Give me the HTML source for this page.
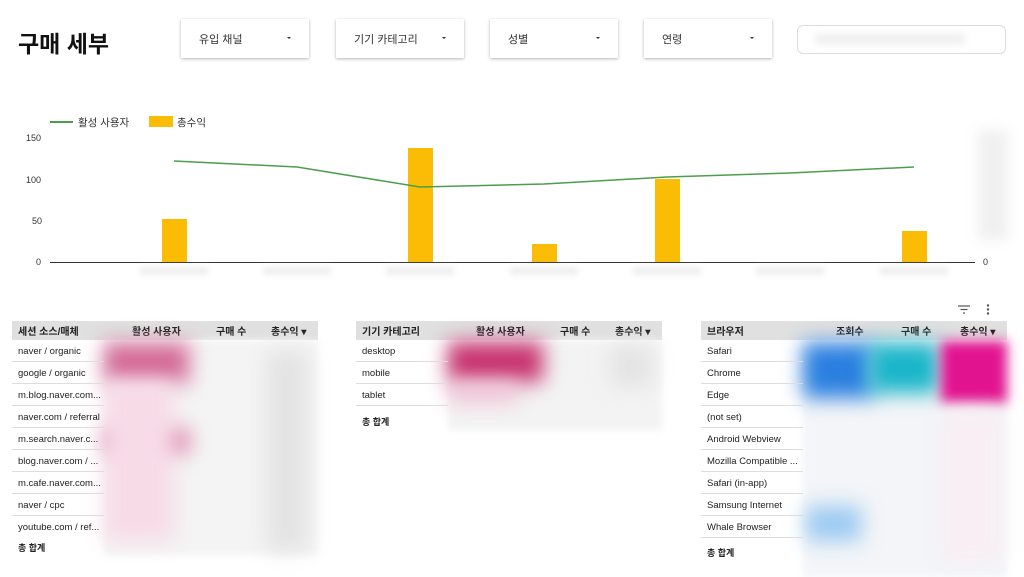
<!DOCTYPE html>
<html><head><meta charset="utf-8"><style>
*{margin:0;padding:0;box-sizing:border-box}
body{width:1024px;height:572px;background:#fff;position:relative;overflow:hidden;font-family:"Liberation Sans","Noto Sans CJK KR",sans-serif;color:#212121}
.a{position:absolute}
.dd{position:absolute;top:19px;width:128px;height:39px;background:#fff;box-shadow:0 1px 3px rgba(0,0,0,.3);font-size:11px;color:#333;padding:12px 0 0 18px}
.dd:after{content:"";position:absolute;right:18px;top:18px;border:2.5px solid transparent;border-top:2.5px solid #333}
.tb{position:absolute;top:321px;width:306px;font-size:9.5px}
.hd{height:19px;background:#e0e0e0;font-weight:bold;position:relative;font-size:10px}
.hd span{position:absolute;top:2px}
.r{height:22px;width:92px;border-bottom:1px solid #ddd;padding:6px 0 0 6px;white-space:nowrap;overflow:hidden;color:#222}
.tot{font-weight:bold;padding:5px 0 0 6px;font-size:9px}
.bl{position:absolute;filter:blur(10px)}
.yl{position:absolute;font-size:9px;color:#333}
</style></head><body>
<div class="a" style="left:18px;top:25px;font-size:23px;font-weight:bold;color:#111">구매 세부</div>
<div class="dd" style="left:181px">유입 채널</div>
<div class="dd" style="left:336px">기기 카테고리</div>
<div class="dd" style="left:490px">성별</div>
<div class="dd" style="left:644px">연령</div>
<div class="a" style="left:797px;top:25px;width:209px;height:29px;border:1px solid #ddd;border-radius:6px"></div>
<div class="bl" style="left:815px;top:34px;width:150px;height:10px;background:#eee;filter:blur(4px)"></div>

<div class="a" style="left:50px;top:121px;width:23px;height:2px;background:#4b9e4b"></div>
<div class="a" style="left:78px;top:115px;font-size:10.5px;color:#333">활성 사용자</div>
<div class="a" style="left:149px;top:116px;width:24px;height:11px;background:#fbbc05"></div>
<div class="a" style="left:177px;top:115px;font-size:10.5px;color:#333">총수익</div>
<div class="yl" style="left:26px;top:133px">150</div>
<div class="yl" style="left:26px;top:175px">100</div>
<div class="yl" style="left:32px;top:216px">50</div>
<div class="yl" style="left:36px;top:257px">0</div>
<div class="yl" style="left:983px;top:257px">0</div>
<div class="bl" style="left:978px;top:130px;width:30px;height:110px;background:#f0f0f0;filter:blur(6px)"></div>
<svg class="a" style="left:0;top:0" width="1024" height="300">
<line x1="50" y1="262.5" x2="975" y2="262.5" stroke="#333" stroke-width="1"/>
<g fill="#fbbc05">
<rect x="162" y="219" width="25" height="43"/>
<rect x="408" y="148" width="25" height="114"/>
<rect x="532" y="244" width="25" height="18"/>
<rect x="655" y="179" width="25" height="83"/>
<rect x="902" y="231" width="25" height="31"/>
</g>
<polyline points="174,161 297,167 420,187 544,184 667,177 790,173 914,167" fill="none" stroke="#4b9e4b" stroke-width="1.5"/>
</svg>
<div class="bl" style="left:140px;top:267px;width:68px;height:8px;background:#eee;filter:blur(3px)"></div>
<div class="bl" style="left:263px;top:267px;width:68px;height:8px;background:#eee;filter:blur(3px)"></div>
<div class="bl" style="left:386px;top:267px;width:68px;height:8px;background:#eee;filter:blur(3px)"></div>
<div class="bl" style="left:510px;top:267px;width:68px;height:8px;background:#eee;filter:blur(3px)"></div>
<div class="bl" style="left:633px;top:267px;width:68px;height:8px;background:#eee;filter:blur(3px)"></div>
<div class="bl" style="left:756px;top:267px;width:68px;height:8px;background:#eee;filter:blur(3px)"></div>
<div class="bl" style="left:880px;top:267px;width:68px;height:8px;background:#eee;filter:blur(3px)"></div>

<!-- table 1 -->
<div class="tb" style="left:12px">
<div class="hd"><span style="left:6px">세션 소스/매체</span><span style="left:120px">활성 사용자</span><span style="left:204px">구매 수</span><span style="left:259px">총수익 ▾</span></div>
<div class="bl" style="left:92px;top:19px;width:214px;height:215px;background:#f4f4f4;filter:blur(4px)"></div>
<div class="bl" style="left:92px;top:22px;width:85px;height:40px;background:#d46a97"></div>
<div class="bl" style="left:92px;top:108px;width:85px;height:24px;background:#db82a8"></div>
<div class="bl" style="left:92px;top:60px;width:70px;height:160px;background:#f7dbe7"></div>
<div class="bl" style="left:255px;top:30px;width:40px;height:200px;background:#e3e3e3"></div>
<div style="position:relative">
<div class="r">naver / organic</div><div class="r">google / organic</div><div class="r">m.blog.naver.com...</div><div class="r">naver.com / referral</div><div class="r">m.search.naver.c...</div><div class="r">blog.naver.com / ...</div><div class="r">m.cafe.naver.com...</div><div class="r">naver / cpc</div><div class="r" style="border:0;height:20px">youtube.com / ref...</div><div class="tot">총 합계</div>
</div></div>

<!-- table 2 -->
<div class="tb" style="left:356px">
<div class="hd"><span style="left:6px">기기 카테고리</span><span style="left:120px">활성 사용자</span><span style="left:204px">구매 수</span><span style="left:259px">총수익 ▾</span></div>
<div class="bl" style="left:92px;top:19px;width:214px;height:90px;background:#f3f3f3;filter:blur(4px)"></div>
<div class="bl" style="left:92px;top:21px;width:95px;height:40px;background:#c8336f"></div>
<div class="bl" style="left:92px;top:62px;width:70px;height:20px;background:#f1c6d8"></div>
<div class="bl" style="left:255px;top:25px;width:40px;height:40px;background:#e3e3e3"></div>
<div style="position:relative">
<div class="r">desktop</div><div class="r">mobile</div><div class="r">tablet</div><div class="tot" style="padding-top:9px">총 합계</div>
</div></div>

<!-- table 3 -->
<svg class="a" style="left:956px;top:303px" width="40" height="14"><g stroke="#555" stroke-width="1.2"><line x1="2" y1="3" x2="14" y2="3"/><line x1="4.5" y1="6.5" x2="11.5" y2="6.5"/><line x1="7" y1="10" x2="9" y2="10"/></g><g fill="#555"><circle cx="32" cy="2.5" r="1.2"/><circle cx="32" cy="6.5" r="1.2"/><circle cx="32" cy="10.5" r="1.2"/></g></svg>
<div class="tb" style="left:701px">
<div class="hd"><span style="left:6px">브라우저</span><span style="left:135px">조회수</span><span style="left:200px">구매 수</span><span style="left:259px">총수익 ▾</span></div>
<div class="bl" style="left:102px;top:19px;width:204px;height:237px;background:#f3f5f8;filter:blur(4px)"></div>
<div class="bl" style="left:102px;top:22px;width:70px;height:55px;background:#2a7fe0"></div>
<div class="bl" style="left:168px;top:22px;width:70px;height:50px;background:#19b5c9"></div>
<div class="bl" style="left:240px;top:20px;width:66px;height:62px;background:#e2138f;filter:blur(6px)"></div>
<div class="bl" style="left:105px;top:185px;width:55px;height:35px;background:#9ccaf1"></div>
<div class="bl" style="left:240px;top:90px;width:60px;height:150px;background:#f8eef3"></div>
<div style="position:relative">
<div class="r" style="width:102px">Safari</div><div class="r" style="width:102px">Chrome</div><div class="r" style="width:102px">Edge</div><div class="r" style="width:102px">(not set)</div><div class="r" style="width:102px">Android Webview</div><div class="r" style="width:102px">Mozilla Compatible ...</div><div class="r" style="width:102px">Safari (in-app)</div><div class="r" style="width:102px">Samsung Internet</div><div class="r" style="width:102px">Whale Browser</div><div class="tot" style="padding-top:8px">총 합계</div>
</div></div>
</body></html>
